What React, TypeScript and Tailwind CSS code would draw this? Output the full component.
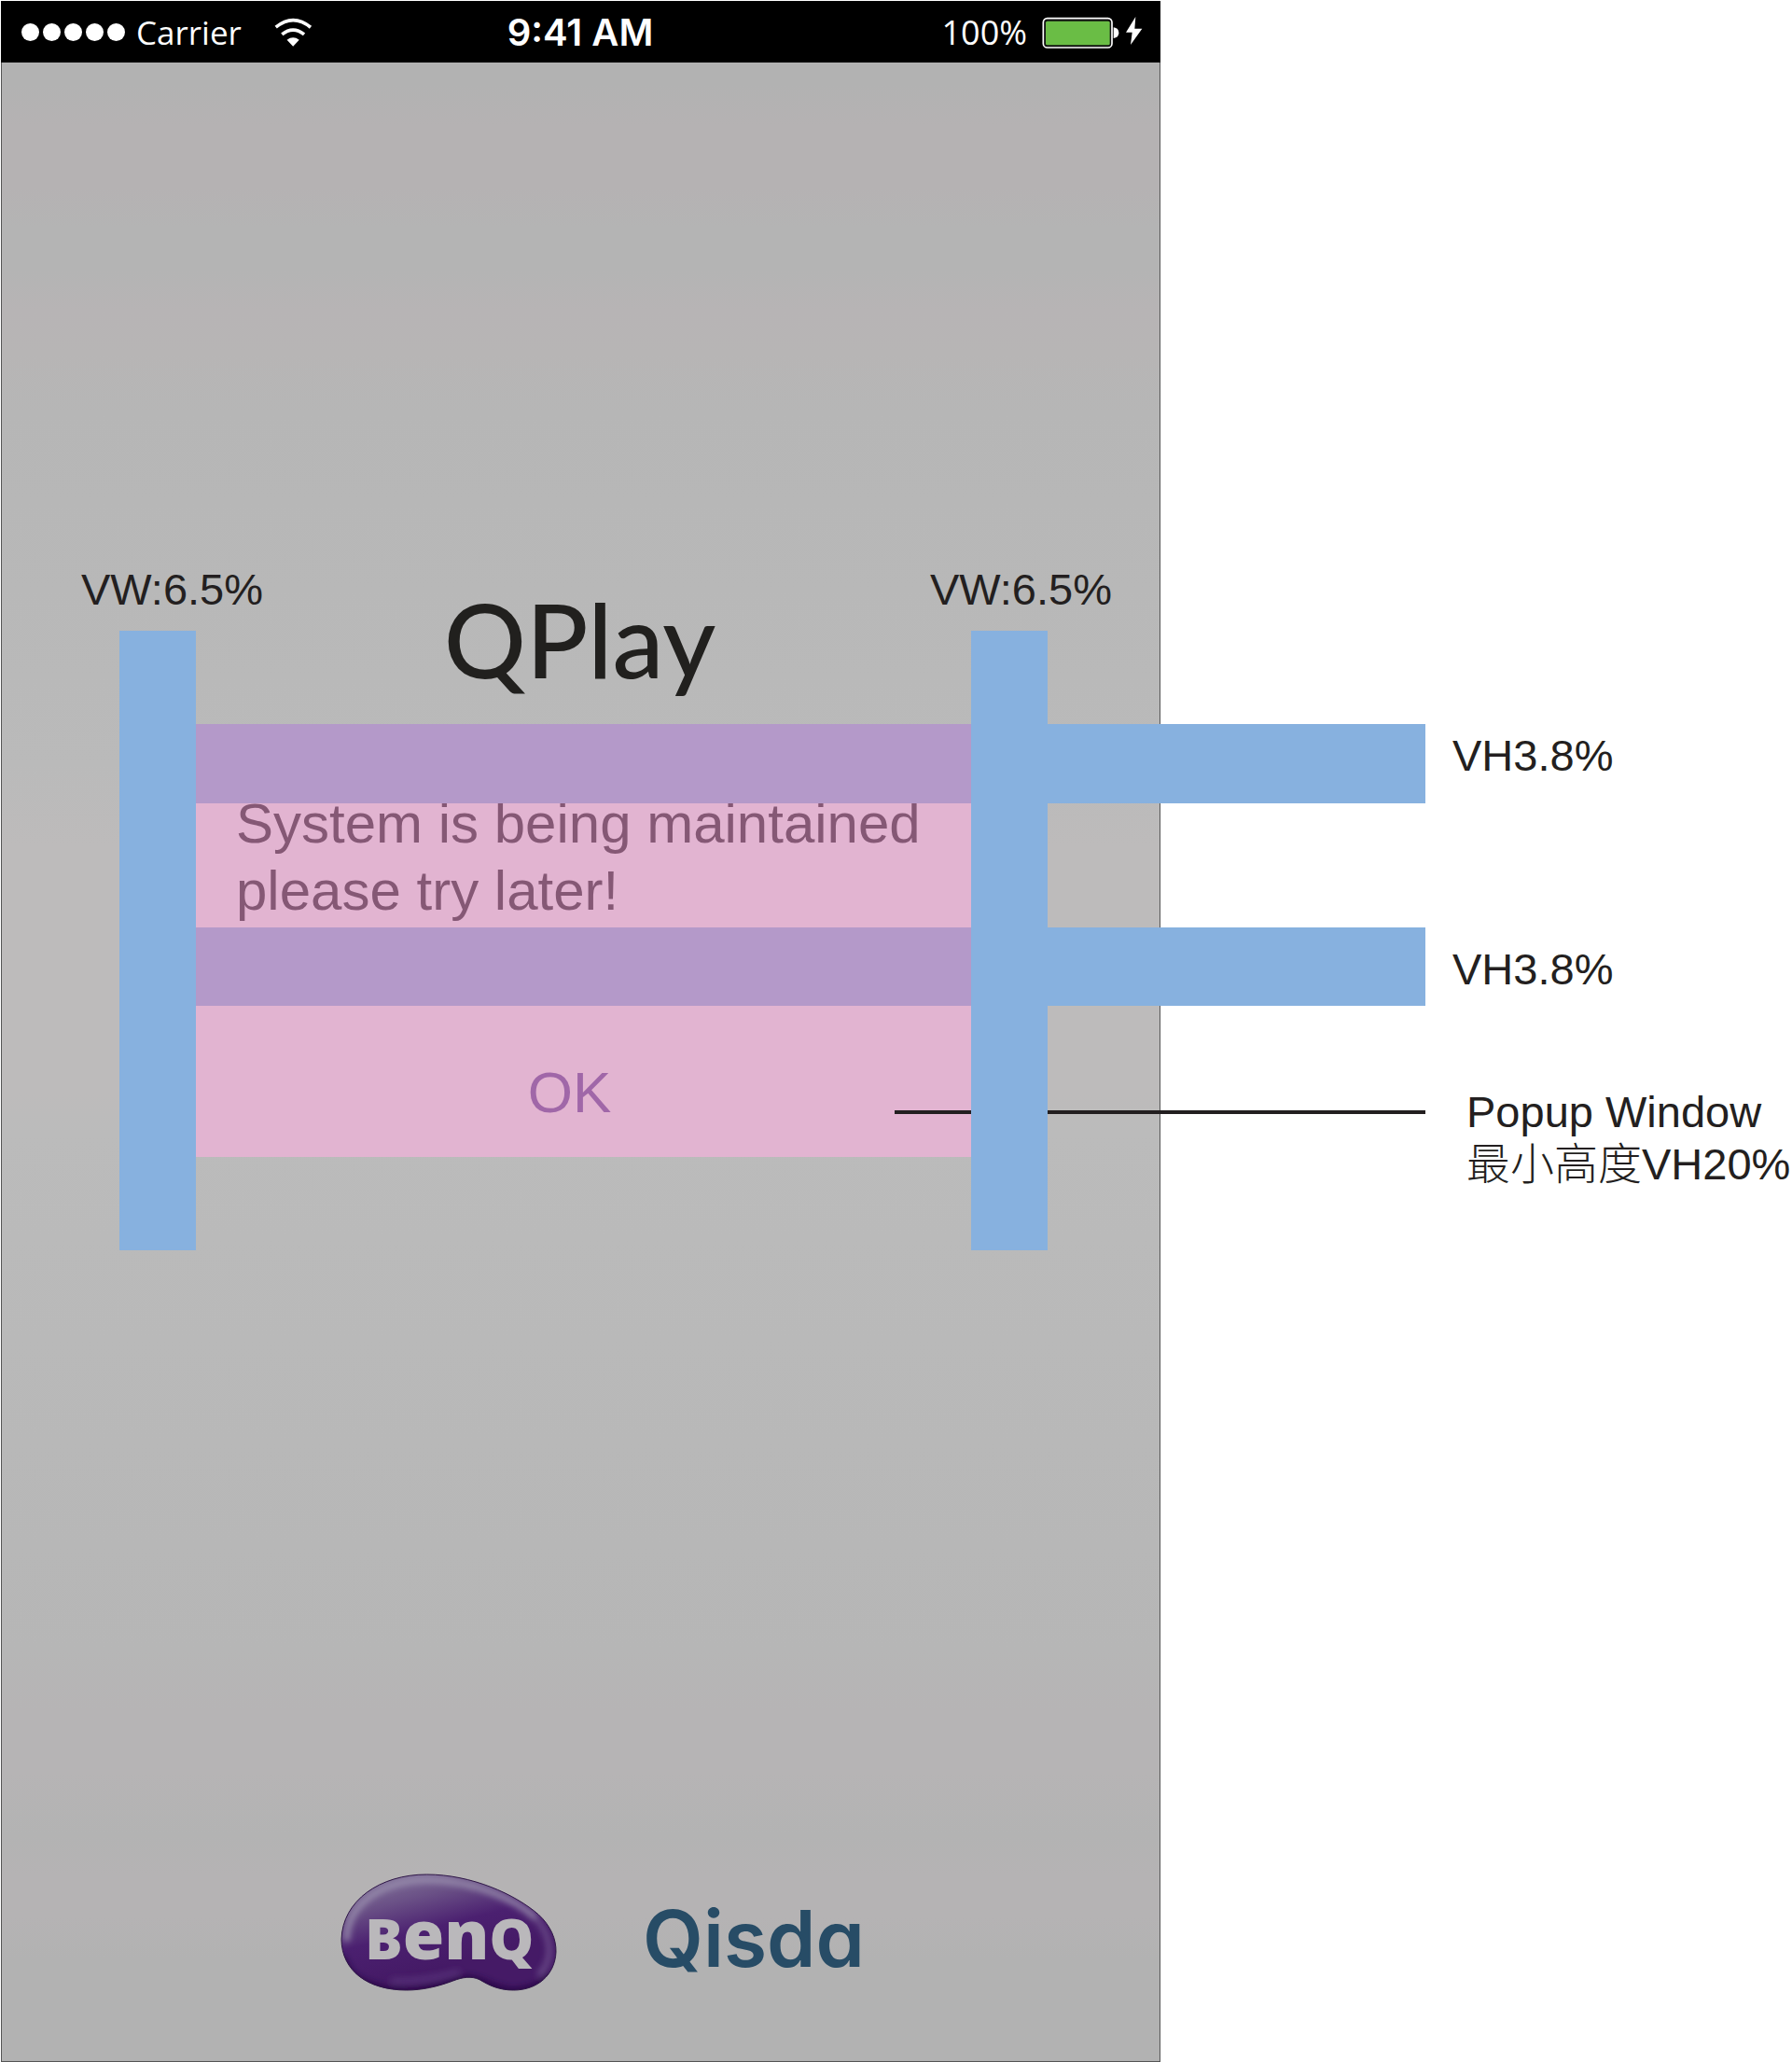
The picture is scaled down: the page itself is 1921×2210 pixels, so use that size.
import React from "react";

function StatusBar() {
  return (
    <header className="z-10 col-start-1 col-end-6 row-start-1 mt-px ml-px grid grid-cols-[1fr_auto_1fr] items-center bg-black pt-px pr-[19px] pl-[22px] text-white">
      <div className="flex items-center">
        <div className="flex gap-1">
          {[0, 1, 2, 3, 4].map((dot) => (
            <span key={dot} className="size-[19px] rounded-full bg-white" />
          ))}
        </div>
        <span className="ml-3 font-['Open_Sans'] text-[35px] leading-[48px]">Carrier</span>
        <svg viewBox="884 56 124 94" className="ml-[35px] h-[31px] w-[41px]" aria-label="Wi-Fi">
          <g fill="none" stroke="#fff" strokeWidth="11">
            <path d="M889 87Q945 41 1002 87" />
            <path d="M909 110Q945 81 981 110" />
          </g>
          <path d="M925 128Q945 113 965 128L945 149Z" fill="#fff" />
        </svg>
      </div>
      <span className="pr-1 font-['Inter'] text-[40px] leading-[48px] font-semibold">9:41 AM</span>
      <div className="flex items-center justify-end">
        <span className="font-['Open_Sans'] text-[36px] leading-[48px]">100%</span>
        <svg viewBox="470 54 324 102" className="ml-4 h-[34px] w-[108px]" aria-label="Battery charging">
          <rect x="474" y="59" width="221" height="94" rx="13" fill="#111" stroke="#fff" strokeWidth="5" />
          <rect x="482" y="68" width="206" height="77" rx="5" fill="#6abd45" />
          <path d="M700 88Q717 90 717 106Q717 121 700 123Z" fill="#fff" />
          <path d="M771 54L740 104H760L755 144L792 92H768Z" fill="#fff" />
        </svg>
      </div>
    </header>
  );
}

function BenqLogo() {
  return (
    <svg viewBox="78 83 696 378" className="h-[126px] w-[232px]" role="img" aria-label="BenQ">
      <defs>
        <linearGradient id="bean" x1="0.2" y1="0" x2="0.55" y2="0.75">
          <stop offset="0" stopColor="#83759b" />
          <stop offset="0.3" stopColor="#6a5086" />
          <stop offset="0.62" stopColor="#4b2070" />
          <stop offset="1" stopColor="#451a66" />
        </linearGradient>
        <filter id="soft" x="-20%" y="-20%" width="140%" height="140%">
          <feGaussianBlur stdDeviation="11" />
        </filter>
        <clipPath id="beanClip">
          <path d="M355 86C500 86 640 150 715 215C755 252 772 295 771 335C768 410 710 458 635 458C590 458 560 445 525 424C500 412 470 416 440 428C390 447 340 458 290 458C165 458 82 395 81 295C84 170 205 86 355 86Z" />
        </clipPath>
      </defs>
      <g clipPath="url(#beanClip)">
        <rect x="78" y="83" width="696" height="378" fill="url(#bean)" />
        <g fill="none" filter="url(#soft)">
          <path d="M98 300C95 180 215 105 355 103C500 103 640 165 705 225" stroke="#9a8fae" strokeWidth="18" />
          <path d="M705 225C760 290 765 360 715 410" stroke="#71558f" strokeWidth="14" />
          <path d="M85 350C100 430 190 460 290 460C390 457 440 426 490 420C540 426 580 462 635 460C690 458 730 440 752 405" stroke="#21053f" strokeWidth="18" />
          <path d="M240 428C320 430 390 418 460 399" stroke="#5d3a80" strokeWidth="12" />
        </g>
      </g>
      <path d="M355 86C500 86 640 150 715 215C755 252 772 295 771 335C768 410 710 458 635 458C590 458 560 445 525 424C500 412 470 416 440 428C390 447 340 458 290 458C165 458 82 395 81 295C84 170 205 86 355 86Z" fill="none" stroke="#2f1747" strokeWidth="3" />
      <text x="157" y="358" fill="#bab8bb" fontFamily="Open Sans" fontWeight="800" fontSize="180">
        B<tspan fontSize="216">en</tspan>Q
      </text>
    </svg>
  );
}

const label = "font-['Liberation_Sans'] text-[47px] leading-[56px] whitespace-nowrap text-[#231f20]";

export default function App() {
  return (
    <main className="grid min-h-screen grid-cols-[minmax(0,128fr)_minmax(0,82fr)_minmax(0,831fr)_minmax(0,82fr)_minmax(0,121fr)_minmax(0,284fr)_minmax(0,393fr)] grid-rows-[67px_minmax(0,609fr)_100px_85px_minmax(133px,auto)_84px_162px_100px_minmax(0,870fr)] overflow-hidden bg-white">
      <div className="col-start-1 col-end-6 row-start-1 row-end-10 mt-px ml-px border border-[#555] bg-[linear-gradient(to_bottom,#b2b2b2_4%,#b5b2b3_6%,#b5b2b3_9%,#b4b4b4_11%,#b4b4b4_13%,#b7b4b5_15%,#b7b5b5_17%,#b6b6b6_20%,#bababa_37%,#bdbbbb_41%,#bdbbbb_53%,#bbbbbb_55%,#b6b6b6_80%,#b6b4b5_83%,#b6b4b5_86%,#b3b3b3_89%,#b5b3b4_91%,#b5b3b4_93%,#b2b2b2_95%)]" />
      <StatusBar />

      <span className={`${label} z-10 col-start-1 col-end-4 row-start-2 self-end pb-4 pl-[87px]`}>VW:6.5%</span>
      <span className={`${label} z-10 col-start-3 col-end-6 row-start-2 self-end justify-self-end pr-[52px] pb-4`}>VW:6.5%</span>

      <h1 className="z-10 col-start-3 row-start-2 row-end-4 self-end justify-self-center pr-2 pb-8 font-['Lato'] text-[110px] leading-[120px] font-medium text-[#21201e]">
        QPlay
      </h1>

      <section role="dialog" aria-label="System message" className="col-start-3 row-start-4 row-end-8 grid grid-rows-subgrid bg-[#e2b4d1] font-['Liberation_Sans']">
        <p className="row-start-2 -mt-3.5 pl-[43px] text-[60px] leading-[72px] text-[#855875]">
          System is being maintained
          <br />
          please try later!
        </p>
        <button type="button" className="row-start-4 pt-6 pr-[30px] text-[62px] leading-[72px] text-[#a067a8]">
          OK
        </button>
      </section>

      <div className="z-10 col-start-3 row-start-4 bg-[#b499c9]" />
      <div className="z-10 col-start-3 row-start-6 bg-[#b499c9]" />
      <div className="z-10 col-start-5 col-end-7 row-start-4 bg-[#87b1df]" />
      <div className="z-10 col-start-5 col-end-7 row-start-6 bg-[#87b1df]" />
      <div className="z-10 col-start-3 col-end-7 row-start-7 mt-28 h-1 w-[43.2%] justify-self-end bg-[#231f20]" />
      <div className="z-20 col-start-2 row-start-3 row-end-9 bg-[#87b1df]" />
      <div className="z-20 col-start-4 row-start-3 row-end-9 bg-[#87b1df]" />

      <span className={`${label} col-start-7 row-start-4 self-start pt-1.5 pl-[29px]`}>VH3.8%</span>
      <span className={`${label} col-start-7 row-start-6 self-center pt-1.5 pl-[29px]`}>VH3.8%</span>
      <p className={`${label} col-start-7 row-start-7 row-end-9 mt-[86px] pl-[44px]`}>
        Popup Window
        <br />
        <span className="font-['Noto_Sans_CJK_TC',sans-serif] leading-[40px] font-light">最小高度</span>VH20%
      </p>

      <footer className="z-10 col-start-1 col-end-6 row-start-9 flex items-end justify-center gap-[92px] pb-[76px] pl-[48px]">
        <BenqLogo />
        <span className="pb-2 font-['Inter'] text-[84px] leading-[96px] font-semibold text-[#274c66] [font-feature-settings:'cv11']">Qisda</span>
      </footer>
    </main>
  );
}
